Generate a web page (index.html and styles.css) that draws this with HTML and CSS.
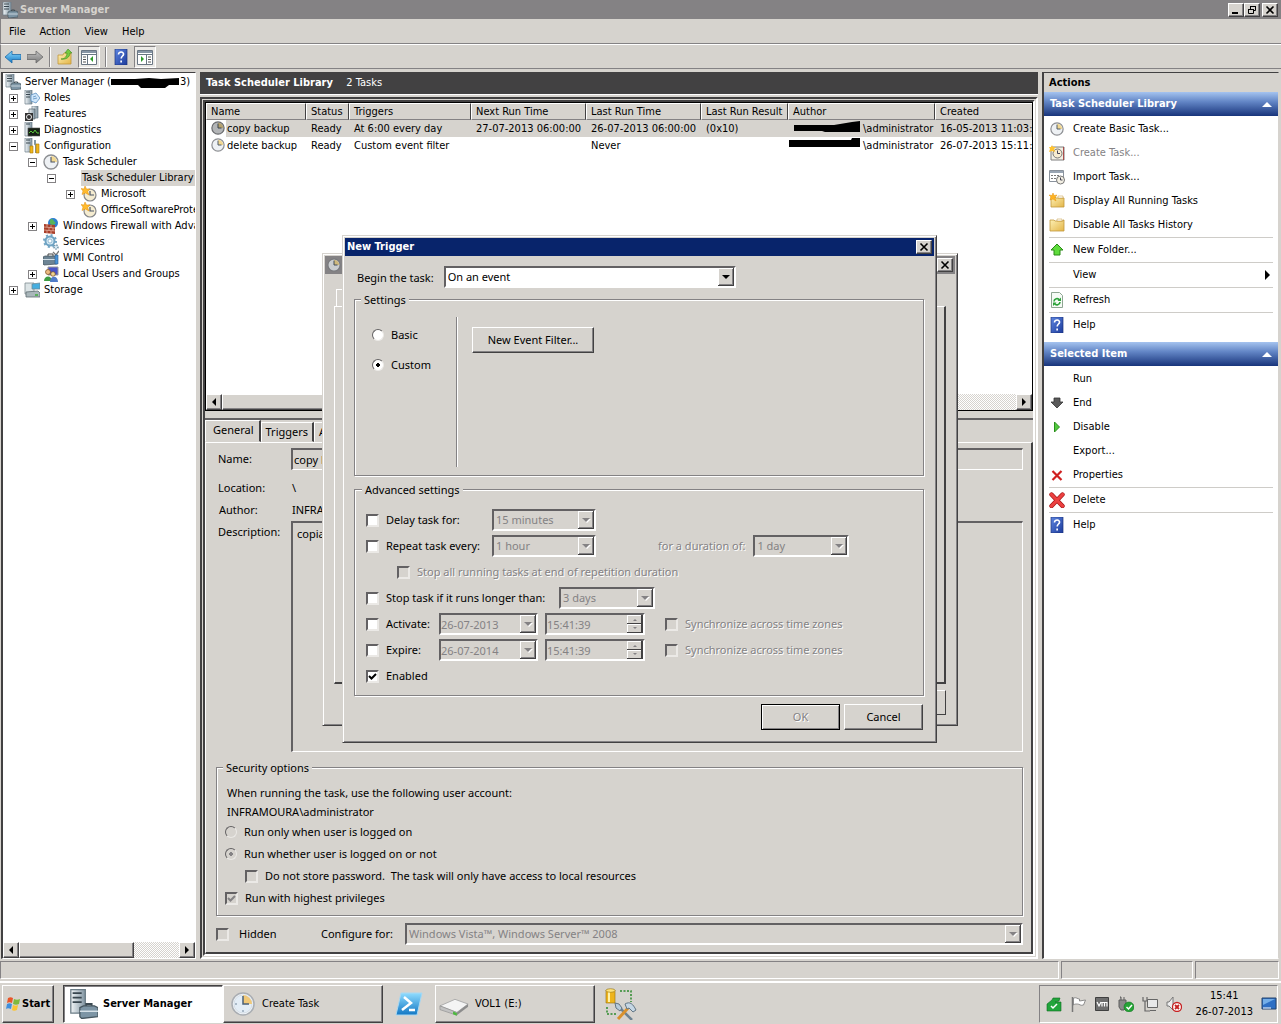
FILE: index.html
```html
<!DOCTYPE html>
<html lang="en">
<head>
  <meta charset="UTF-8">
  <meta name="viewport" content="width=device-width, initial-scale=1.0">
  <title>Server Manager</title>
  <link rel="stylesheet" href="styles.css">
</head>
<body>
  <!-- Icon sprite -->
  <svg class="sprite" aria-hidden="true">
    <defs>
      <linearGradient id="g-tower" x1="0" x2="1" y1="0" y2="0"><stop offset="0" stop-color="#f2f6f8"/><stop offset="1" stop-color="#7f93a0"/></linearGradient>
      <linearGradient id="g-blue" x1="0" x2="0" y1="0" y2="1"><stop offset="0" stop-color="#8fdcff"/><stop offset="1" stop-color="#1277c4"/></linearGradient>
      <linearGradient id="g-gray" x1="0" x2="0" y1="0" y2="1"><stop offset="0" stop-color="#c4c4c4"/><stop offset="1" stop-color="#777"/></linearGradient>
      <linearGradient id="g-folder" x1="0" x2="1" y1="0" y2="1"><stop offset="0" stop-color="#fdf0b4"/><stop offset="1" stop-color="#e3b548"/></linearGradient>
      <linearGradient id="g-help" x1="0" x2="1" y1="0" y2="1"><stop offset="0" stop-color="#5f86e0"/><stop offset="1" stop-color="#1c3b9c"/></linearGradient>
    </defs>
    <symbol id="i-server" viewBox="0 0 16 16">
      <path d="M1 0h8v13H1z" fill="url(#g-tower)" stroke="#6b7c86" stroke-width=".7"/>
      <path d="M2 2h5M2 4.500h5M2 7h5" stroke="#38464f"/>
      <path d="M9.500 9.500V8h3v1.500" fill="none" stroke="#3c4a52"/>
      <path d="M6 10l2-1h6l2 1v5l-9 1-1-1z" fill="#7d95a5" stroke="#46565f" stroke-width=".7"/>
      <path d="M6 12h10" stroke="#d7e2e8" stroke-width=".8"/>
    </symbol>
    <symbol id="i-roles" viewBox="0 0 16 16">
      <path d="M1 0h7v14H1z" fill="url(#g-tower)" stroke="#6b7c86" stroke-width=".7"/>
      <path d="M2 2h4M2 4.500h4M2 7h4" stroke="#38464f"/>
      <path d="M7 5l5-2 4 5-4 5-5-2z" fill="#cfe6fa" stroke="#5a8fc0" stroke-width=".8"/>
      <path d="M9 7l3-1M9 9l4-1" stroke="#5a8fc0" stroke-width=".8"/>
    </symbol>
    <symbol id="i-features" viewBox="0 0 16 16">
      <path d="M8 0h6v12H8z" fill="url(#g-tower)" stroke="#6b7c86" stroke-width=".7"/>
      <path d="M5 3h6v10H5z" fill="url(#g-tower)" stroke="#56656e" stroke-width=".7"/>
      <path d="M1 7h8v8H1z" fill="#333"/>
      <circle cx="5" cy="11" r="2.500" fill="#333" stroke="#eee"/>
    </symbol>
    <symbol id="i-diag" viewBox="0 0 16 16">
      <path d="M1 0h7v14H1z" fill="url(#g-tower)" stroke="#6b7c86" stroke-width=".7"/>
      <path d="M2 2h4" stroke="#38464f"/>
      <path d="M4 6h12v8H4z" fill="#162016" stroke="#555" stroke-width=".6"/>
      <path d="M5 11l2-2 2 2 2-3 2 3h2" fill="none" stroke="#5cc83b"/>
    </symbol>
    <symbol id="i-config" viewBox="0 0 16 16">
      <path d="M1 0h7v14H1z" fill="url(#g-tower)" stroke="#6b7c86" stroke-width=".7"/>
      <path d="M2 2h4M2 5h4" stroke="#38464f"/>
      <path d="M7 4v10M11 2v4l1 1v8" stroke="#8597a2" stroke-width="2" fill="none"/>
      <path d="M6 8h3v7H6zM12 6h3v9h-3z" fill="#efb61c" stroke="#a77806" stroke-width=".6"/>
    </symbol>
    <symbol id="i-clock" viewBox="0 0 16 16">
      <circle cx="8" cy="8" r="7" fill="#eef1f4" stroke="#8d8f93" stroke-width="1.400"/>
      <path d="M8 8V2a6 6 0 0 1 6 6z" fill="#f2d892"/>
      <path d="M8 3v5h4" fill="none" stroke="#4a5566" stroke-width="1.100"/>
    </symbol>
    <symbol id="i-starclock" viewBox="0 0 16 16">
      <circle cx="9" cy="9" r="6" fill="#f5ecd0" stroke="#85878a" stroke-width="1.200"/>
      <path d="M9 5v4h4" fill="none" stroke="#4a5566" stroke-width="1.200"/>
      <path d="M4 0l1.500 3L9 3 6.500 5.500 8 9 4.500 7 1 8.500 2 5 0 2.500 3 3z" fill="#ffbb2e" stroke="#e08c0d" stroke-width=".5"/>
    </symbol>
    <symbol id="i-firewall" viewBox="0 0 16 16">
      <circle cx="10" cy="5" r="5" fill="#2d7fd0"/>
      <path d="M8 1c3 0 2 2 4 3s-1 3-3 3-3-4-1-6z" fill="#58b45a"/>
      <path d="M1 6l11 1v9L1 15z" fill="#a83f2b"/>
      <path d="M1 9l11 1M1 12l11 1M4 6v3M8 7v3M6 9.500v3M10 10v3M4 12v3M8 13v3" stroke="#e8b9a8" stroke-width=".7"/>
    </symbol>
    <symbol id="i-gear" viewBox="0 0 16 16">
      <circle cx="7" cy="7" r="4.500" fill="#d8ebf5" stroke="#6fa3c3" stroke-width="2"/>
      <circle cx="7" cy="7" r="6" fill="none" stroke="#6fa3c3" stroke-width="2" stroke-dasharray="2 2.700"/>
      <circle cx="7" cy="7" r="2" fill="#fff" stroke="#6fa3c3" stroke-width=".7"/>
      <circle cx="13" cy="13" r="2" fill="#d8ebf5" stroke="#6f93a8" stroke-width="1.500" stroke-dasharray="1.200 1"/>
    </symbol>
    <symbol id="i-wmi" viewBox="0 0 16 16">
      <path d="M5 6V4h5v2" fill="none" stroke="#444"/>
      <path d="M0 7l2-1h10l2 1v7l-13 1-1-1z" fill="#6d8494" stroke="#3d4d58" stroke-width=".7"/>
      <path d="M0 9.500h13" stroke="#d2dee6"/>
      <path d="M10 2l3 3 3-4" fill="none" stroke="#777" stroke-width="1.300"/>
      <path d="M12 5h3v9h-3z" fill="#4a93d6" stroke="#2a5d90" stroke-width=".6"/>
    </symbol>
    <symbol id="i-users" viewBox="0 0 16 16">
      <path d="M5 1h10v8H5z" fill="#4a55c8" stroke="#999"/>
      <circle cx="5" cy="6" r="2.500" fill="#edbb84" stroke="#7a4d1c" stroke-width=".7"/>
      <path d="M1 15c0-6 8-6 8 0z" fill="#3e9d44"/>
      <circle cx="10" cy="8" r="2.300" fill="#f0d48f" stroke="#7a4d1c" stroke-width=".7"/>
      <path d="M7 16c0-7 8-7 8 0z" fill="#4f7cc9"/>
    </symbol>
    <symbol id="i-storage" viewBox="0 0 16 16">
      <path d="M1 1h9v11H1z" fill="#dce4e6" stroke="#7e8b90" stroke-width=".8"/>
      <path d="M8 2l8-1v6H8z" fill="#45aee0" stroke="#6c8a99" stroke-width=".8"/>
      <path d="M2 10l12-1 2 2v4H2z" fill="#aab7bb" stroke="#5f6d72" stroke-width=".8"/>
      <path d="M11 13h3" stroke="#3fae3b" stroke-width="1.500"/>
    </symbol>
    <symbol id="i-help" viewBox="0 0 16 16">
      <path d="M2 0h12v16H2z" fill="url(#g-help)" stroke="#1c347c" stroke-width=".7"/>
      <path d="M5.500 5.500c0-3.500 5.500-3 5 0-.3 1.600-2.300 1.700-2.300 4" fill="none" stroke="#fff" stroke-width="1.600"/>
      <path d="M7.300 11.500H9v2H7.300z" fill="#fff"/>
    </symbol>
    <symbol id="i-back" viewBox="0 0 16 16">
      <path d="M0 8l7-6v3.500h9v5H7V14z" fill="url(#g-blue)" stroke="#1d6ba8" stroke-width=".8"/>
    </symbol>
    <symbol id="i-forward" viewBox="0 0 16 16">
      <path d="M16 8L9 2v3.500H0v5h9V14z" fill="url(#g-gray)" stroke="#6a6a6a" stroke-width=".8"/>
    </symbol>
    <symbol id="i-up" viewBox="0 0 16 16">
      <path d="M1 6h5l1-2h7v11H1z" fill="url(#g-folder)" stroke="#c2973a" stroke-width=".8"/>
      <path d="M4 10c4 0 6-3 6-6h-2l3-4 4 4h-2c0 4-4 7-9 6z" fill="#76c940" stroke="#3e8c1c" stroke-width=".6"/>
    </symbol>
    <symbol id="i-paneleft" viewBox="0 0 16 16">
      <path d="M.5 1.500h15v14H.5z" fill="#fff" stroke="#6a7683"/>
      <path d="M1 2h14v2H1z" fill="#8795a5"/>
      <path d="M0 5.500h16M6.500 5v10" stroke="#6a7683"/>
      <path d="M2 8h3M2 10.500h3M2 13h3" stroke="#555"/>
      <path d="M12 7v6L9 10z" fill="#2f9a2a"/>
    </symbol>
    <symbol id="i-paneright" viewBox="0 0 16 16">
      <path d="M.5 1.500h15v14H.5z" fill="#fff" stroke="#6a7683"/>
      <path d="M1 2h14v2H1z" fill="#8795a5"/>
      <path d="M0 5.500h16M9.500 5v10" stroke="#6a7683"/>
      <path d="M11 8h3M11 10.500h3M11 13h3" stroke="#555"/>
      <path d="M4 7v6l3-3z" fill="#2f9a2a"/>
    </symbol>
    <symbol id="i-newtask" viewBox="0 0 16 16">
      <path d="M2 2h13v13H2z" fill="#f3f0e4" stroke="#7e7e7e"/>
      <path d="M14.500 2v13" stroke="#a33" stroke-width=".8"/>
      <circle cx="8.500" cy="8.500" r="4.500" fill="#f7ecd0" stroke="#777"/>
      <path d="M8.500 5.500v3H11" fill="none" stroke="#445"/>
      <path d="M3 0l1 2h3L5 4l1 3-3-1-3 1 1-3-1-2h2z" fill="#ffc332"/>
    </symbol>
    <symbol id="i-import" viewBox="0 0 16 16">
      <path d="M.5 1.500h14v11H.5z" fill="#fff" stroke="#8a929c"/>
      <path d="M1 2h13v2H1z" fill="#9aa6b4"/>
      <path d="M2 6.500h2M5 6.500h2M8 6.500h2M2 9.500h2M5 9.500h2" stroke="#777"/>
      <circle cx="11.500" cy="11" r="4" fill="#f4f0e4" stroke="#777"/>
      <path d="M11.500 8.500V11h2" fill="none" stroke="#445"/>
    </symbol>
    <symbol id="i-folder" viewBox="0 0 16 16">
      <path d="M1 3h4l1 1h8V3h1v11H1z" fill="url(#g-folder)" stroke="#c2973a" stroke-width=".8"/>
      <path d="M8 2h5v2H8z" fill="#fff" stroke="#c2973a" stroke-width=".5"/>
    </symbol>
    <symbol id="i-starfolder" viewBox="0 0 16 16">
      <path d="M2 4h4l1 1h8v9H2z" fill="url(#g-folder)" stroke="#c2973a" stroke-width=".8"/>
      <path d="M9 3h5v2H9z" fill="#fff" stroke="#c2973a" stroke-width=".5"/>
      <path d="M4 0l1 2.500L8 2 6 4.500 7 8 4 6 1 7l1-3-2-2 3 .5z" fill="#ffb321" stroke="#e2920e" stroke-width=".5"/>
    </symbol>
    <symbol id="i-greenup" viewBox="0 0 16 16">
      <path d="M8 2l6 6h-3v5H5V8H2z" fill="#5fdc3c" stroke="#2a8a17"/>
    </symbol>
    <symbol id="i-refresh" viewBox="0 0 16 16">
      <path d="M2.500.5h8l3 3v12h-11z" fill="#f6fbf6" stroke="#8ea592"/>
      <path d="M5 9.500a3 3 0 0 1 5.500-1.500M11 10a3 3 0 0 1-5.500 1.500" fill="none" stroke="#2da23a" stroke-width="1.700"/>
      <path d="M8.500 9H12V5.500zM7.500 10.500H4V14z" fill="#2da23a"/>
    </symbol>
    <symbol id="i-end" viewBox="0 0 16 16">
      <path d="M5 3h6v4h3l-6 6-6-6h3z" fill="#5b5b5b" stroke="#333" stroke-width=".8"/>
    </symbol>
    <symbol id="i-play" viewBox="0 0 16 16">
      <path d="M5.500 3v10l5-5z" fill="#52c93f" stroke="#2a8f1b"/>
    </symbol>
    <symbol id="i-redx" viewBox="0 0 16 16">
      <path d="M3.500 4l9 9M12.500 4l-9 9" stroke="#cf2020" stroke-width="2.200"/>
    </symbol>
    <symbol id="i-bigx" viewBox="0 0 16 16">
      <path d="M2.500 2.500l11 11.500M13.500 2.500l-11 11.500" stroke="#a01414" stroke-width="4.400" stroke-linecap="round"/>
      <path d="M2.500 2.500l11 11.500M13.500 2.500l-11 11.500" stroke="#ec4040" stroke-width="3.200" stroke-linecap="round"/>
    </symbol>
    <symbol id="i-close" viewBox="0 0 10 10">
      <path d="M1.500 1.500l7 7M8.500 1.500l-7 7" stroke="#000" stroke-width="1.600"/>
    </symbol>
  </svg>

  <header class="titlebar">
    <svg class="icon"><use href="#i-server"/></svg>
    <h1>Server Manager</h1>
    <div class="window-buttons">
      <button class="win-btn" aria-label="Minimize"><svg viewBox="0 0 10 10"><path d="M1 8h6" stroke="#000" stroke-width="2"/></svg></button>
      <button class="win-btn" aria-label="Restore"><svg viewBox="0 0 10 10"><path d="M3.500 4V1.500h5v4H7M3 1.500h6M1.500 4.500h5v4h-5zM1 4.500h6" fill="none" stroke="#000"/></svg></button>
      <button class="win-btn last" aria-label="Close"><svg><use href="#i-close"/></svg></button>
    </div>
  </header>

  <nav class="menubar">
    <a href="#">File</a>
    <a href="#">Action</a>
    <a href="#">View</a>
    <a href="#">Help</a>
  </nav>

  <div class="toolbar">
    <button aria-label="Back"><svg class="icon"><use href="#i-back"/></svg></button>
    <button aria-label="Forward"><svg class="icon"><use href="#i-forward"/></svg></button>
    <span class="tool-sep"></span>
    <button aria-label="Up one level"><svg class="icon"><use href="#i-up"/></svg></button>
    <button class="pressed" aria-label="Console tree"><svg class="icon"><use href="#i-paneleft"/></svg></button>
    <span class="tool-sep"></span>
    <button aria-label="Help"><svg class="icon"><use href="#i-help"/></svg></button>
    <button class="pressed" aria-label="Action pane"><svg class="icon"><use href="#i-paneright"/></svg></button>
  </div>

  <main class="panes">
    <!-- Console tree -->
    <aside class="tree-pane">
      <div class="tree">
        <div class="node root"><svg class="icon"><use href="#i-server"/></svg><span>Server Manager (</span><svg class="redact-tree" viewBox="0 0 70 12"><path d="M0 3h24l14-1 12 1 18-1v7H58l-4 3H30l-3-3H0z"/></svg><span>3)</span></div>
        <ul>
          <li><div class="node"><i class="exp plus"></i><svg class="icon"><use href="#i-roles"/></svg><span>Roles</span></div></li>
          <li><div class="node"><i class="exp plus"></i><svg class="icon"><use href="#i-features"/></svg><span>Features</span></div></li>
          <li><div class="node"><i class="exp plus"></i><svg class="icon"><use href="#i-diag"/></svg><span>Diagnostics</span></div></li>
          <li><div class="node"><i class="exp"></i><svg class="icon"><use href="#i-config"/></svg><span>Configuration</span></div>
            <ul>
              <li><div class="node"><i class="exp"></i><svg class="icon"><use href="#i-clock"/></svg><span>Task Scheduler</span></div>
                <ul>
                  <li><div class="node no-icon"><i class="exp"></i><span class="selected">Task Scheduler Library</span></div>
                    <ul>
                      <li><div class="node"><i class="exp plus"></i><svg class="icon"><use href="#i-starclock"/></svg><span>Microsoft</span></div></li>
                      <li><div class="node leaf"><svg class="icon"><use href="#i-starclock"/></svg><span>OfficeSoftwareProtectionPlatform</span></div></li>
                    </ul>
                  </li>
                </ul>
              </li>
              <li><div class="node"><i class="exp plus"></i><svg class="icon"><use href="#i-firewall"/></svg><span>Windows Firewall with Advanced Security</span></div></li>
              <li><div class="node leaf"><svg class="icon"><use href="#i-gear"/></svg><span>Services</span></div></li>
              <li><div class="node leaf"><svg class="icon"><use href="#i-wmi"/></svg><span>WMI Control</span></div></li>
              <li><div class="node"><i class="exp plus"></i><svg class="icon"><use href="#i-users"/></svg><span>Local Users and Groups</span></div></li>
            </ul>
          </li>
          <li><div class="node"><i class="exp plus"></i><svg class="icon"><use href="#i-storage"/></svg><span>Storage</span></div></li>
        </ul>
      </div>
      <div class="scrollbar">
        <button class="scroll-btn left" aria-label="Scroll left"></button>
        <div class="thumb tree-thumb"></div>
        <button class="scroll-btn right" aria-label="Scroll right"></button>
      </div>
    </aside>

    <!-- Task list and details -->
    <section class="center-pane">
      <h2 class="pane-title">Task Scheduler Library <small>2 Tasks</small></h2>
      <div class="center-body">
        <div class="task-list">
          <div class="task-scroll">
            <table class="tasks">
              <colgroup>
                <col class="c-name"><col class="c-status"><col class="c-triggers"><col class="c-next"><col class="c-last"><col class="c-result"><col class="c-author"><col class="c-created">
              </colgroup>
              <thead>
                <tr><th>Name</th><th>Status</th><th>Triggers</th><th>Next Run Time</th><th>Last Run Time</th><th>Last Run Result</th><th>Author</th><th>Created</th></tr>
              </thead>
              <tbody>
                <tr class="current">
                  <td><svg class="task-icon dim"><use href="#i-clock"/></svg>copy backup</td><td>Ready</td><td>At 6:00 every day</td><td>27-07-2013 06:00:00</td><td>26-07-2013 06:00:00</td><td>(0x10)</td>
                  <td><svg class="redact" viewBox="0 0 70 12"><path d="M1 4h40l18-3 8-1v11H32l-3-1H1z"/></svg>\administrator</td><td>16-05-2013 11:03:</td>
                </tr>
                <tr>
                  <td><svg class="task-icon"><use href="#i-clock"/></svg>delete backup</td><td>Ready</td><td>Custom event filter</td><td></td><td>Never</td><td></td>
                  <td><svg class="redact" viewBox="0 0 70 12"><path d="M-4 2h62l1-2h8v9H-4z"/></svg>\administrator</td><td>26-07-2013 15:11:</td>
                </tr>
              </tbody>
            </table>
          </div>
          <div class="scrollbar">
            <button class="scroll-btn left" aria-label="Scroll left"></button>
            <div class="thumb list-thumb"></div>
            <button class="scroll-btn right" aria-label="Scroll right"></button>
          </div>
        </div>

        <div class="details ui">
          <div class="tabs">
            <button class="tab active">General</button>
            <button class="tab">Triggers</button>
            <button class="tab">Actions</button>
          </div>
          <div class="tab-page">
            <div class="props">
              <label for="task-name">Name:</label>
              <input id="task-name" class="sunken" type="text" value="copy backup" readonly>
              <span>Location:</span><span>\</span>
              <span>Author:</span><span>INFRAMOURA\administrator</span>
              <label for="task-desc">Description:</label>
              <textarea id="task-desc" class="sunken" readonly>copia</textarea>
            </div>
            <fieldset class="group security">
              <legend>Security options</legend>
              <p>When running the task, use the following user account:</p>
              <p>INFRAMOURA\administrator</p>
              <label class="check"><input type="radio" name="logon" disabled>Run only when user is logged on</label>
              <label class="check"><input type="radio" name="logon" checked disabled>Run whether user is logged on or not</label>
              <label class="check indent"><input type="checkbox" disabled>Do not store password.&nbsp; The task will only have access to local resources</label>
              <label class="check"><input type="checkbox" checked disabled>Run with highest privileges</label>
            </fieldset>
            <div class="configure">
              <label class="check hidden-check"><input type="checkbox" disabled>Hidden</label>
              <label for="configure-for">Configure for:</label>
              <select id="configure-for" class="sunken" disabled><option>Windows Vista™, Windows Server™ 2008</option></select>
            </div>
          </div>
        </div>
      </div>
    </section>

    <!-- Actions -->
    <aside class="actions-pane">
      <h2>Actions</h2>
      <h3>Task Scheduler Library<i class="collapse"></i></h3>
      <ul>
        <li><a href="#"><svg class="icon small"><use href="#i-clock"/></svg>Create Basic Task...</a></li>
        <li><a href="#" class="off"><svg class="icon"><use href="#i-newtask"/></svg>Create Task...</a></li>
        <li><a href="#"><svg class="icon"><use href="#i-import"/></svg>Import Task...</a></li>
        <li><a href="#"><svg class="icon"><use href="#i-starfolder"/></svg>Display All Running Tasks</a></li>
        <li><a href="#"><svg class="icon"><use href="#i-folder"/></svg>Disable All Tasks History</a></li>
        <li class="line"><a href="#"><svg class="icon"><use href="#i-greenup"/></svg>New Folder...</a></li>
        <li class="line"><a href="#"><span class="icon"></span>View<i class="submenu"></i></a></li>
        <li class="line"><a href="#"><svg class="icon"><use href="#i-refresh"/></svg>Refresh</a></li>
        <li class="line"><a href="#"><svg class="icon"><use href="#i-help"/></svg>Help</a></li>
      </ul>
      <h3>Selected Item<i class="collapse"></i></h3>
      <ul>
        <li><a href="#"><span class="icon"></span>Run</a></li>
        <li><a href="#"><svg class="icon"><use href="#i-end"/></svg>End</a></li>
        <li><a href="#"><svg class="icon"><use href="#i-play"/></svg>Disable</a></li>
        <li><a href="#"><span class="icon"></span>Export...</a></li>
        <li><a href="#"><svg class="icon"><use href="#i-redx"/></svg>Properties</a></li>
        <li class="line"><a href="#"><svg class="icon"><use href="#i-bigx"/></svg>Delete</a></li>
        <li class="line"><a href="#"><svg class="icon"><use href="#i-help"/></svg>Help</a></li>
      </ul>
    </aside>
  </main>

  <div class="statusbar"><span></span><span></span><span></span></div>

  <footer class="taskbar">
    <button class="task-btn start">
      <svg viewBox="0 0 16 16"><path d="M3 2c2-1 3-1 5 0L7 7C5 6 4 6 2 7z" fill="#e8562a"/><path d="M9 3c2 1 4 1 6 0l-1 5c-2 1-4 1-6 0z" fill="#7fba3c"/><path d="M2 8c2-1 3-1 5 0l-1 5c-2-1-4-1-5 0z" fill="#3f8fdd"/><path d="M8 9c2 1 3 1 5 0l-1 5c-2 1-4 1-5 0z" fill="#fbc531"/></svg>
      Start
    </button>
    <button class="task-btn wide current-app"><svg><use href="#i-server"/></svg>Server Manager</button>
    <button class="task-btn wide clock-app">
      <svg viewBox="0 0 24 24"><circle cx="12" cy="12" r="11" fill="#eef3f8" stroke="#a9adb2" stroke-width="1.500"/><circle cx="12" cy="12" r="9" fill="#e3edf6" stroke="#c9d2da" stroke-width=".6"/><path d="M12 12V3a9 9 0 0 1 9 9z" fill="#f0c878"/><path d="M12 4v8h6" fill="none" stroke="#4a6078" stroke-width="1.500"/><path d="M12 18v2M4 12h2" stroke="#70859a"/></svg>
      Create Task
    </button>
    <button class="quick" aria-label="PowerShell">
      <svg viewBox="0 0 28 24"><path d="M6 1h21l-5 22H1z" fill="url(#g-blue)" stroke="#a9d8f2"/><path d="M9 5l7 6-9 7" fill="none" stroke="#fff" stroke-width="2.500"/><path d="M14 18h6" stroke="#fff" stroke-width="2.500"/></svg>
    </button>
    <button class="task-btn wide drive-app">
      <svg viewBox="0 0 32 32"><path d="M1 18l16-7 14 5-12 9z" fill="#f4f4f4" stroke="#aaa"/><path d="M1 18l18 7v3L1 22z" fill="#c2c2c2" stroke="#888" stroke-width=".6"/><path d="M19 25l12-9v3l-12 9z" fill="#8c8c8c"/><path d="M15 24l4 1.500v3L15 27z" fill="#4cba3c"/></svg>
      VOL1 (E:)
    </button>
    <button class="quick tools" aria-label="Storage tools">
      <svg viewBox="0 0 32 32"><path d="M1 2h9v13H1z" fill="#eeb41d" stroke="#94700e" stroke-width=".6"/><path d="M3 3h2v11H3z" fill="#fff1a8"/><ellipse cx="5.500" cy="2.500" rx="4.500" ry="1.800" fill="#ffe37a" stroke="#94700e" stroke-width=".6"/><path d="M15 3h11v11M2 19v7h10" fill="none" stroke="#2c8b2c" stroke-width="1.500" stroke-dasharray="2 1.500"/><path d="M14 19l13 13" stroke="#6d8291" stroke-width="2.500"/><path d="M24 19L13 31" stroke="#d9912d" stroke-width="3"/><path d="M10 15l4 1 3 4-2 3-4-3z" fill="#b6cbdc" stroke="#617584"/><path d="M20 16c5-3 8 0 11 6l-3 2-4-4-2 1z" fill="#c5d6e4" stroke="#617584"/></svg>
    </button>
    <div class="tray">
      <svg viewBox="0 0 16 16"><path d="M1 8l5-4 1-2h7l-1 3-4 1h6v9H1z" fill="#22a53c" stroke="#0d6b20" stroke-width=".6"/><path d="M5 10l2 2 4-4" fill="none" stroke="#fff" stroke-width="1.500"/></svg>
      <svg viewBox="0 0 16 16"><path d="M2.500 1v15" stroke="#777" stroke-width="1.500"/><path d="M3.500 2c3-1 4 1 6 1v2l6-1-2 5c-3 1-4-1-6-1s-3 0-4 1z" fill="#fff" stroke="#777" stroke-width=".8"/></svg>
      <svg viewBox="0 0 16 16"><path d="M1.500 1.500h13v13h-13z" fill="#6e6e6e" stroke="#3f3f3f"/><path d="M3 6l2 4 2-4M8 10.500V6.500h2.500v4M10.500 6.500H13v4" fill="none" stroke="#fff" stroke-width="1.200"/></svg>
      <svg viewBox="0 0 16 16"><path d="M2 1h1v3M6 1v3M1 4h7v7l-2 3H3l-2-3z" fill="#8a8a8a" stroke="#5d5d5d"/><circle cx="11" cy="11" r="5" fill="#25a336" stroke="#117520" stroke-width=".6"/><path d="M8.500 11l2 2 3.500-4" fill="none" stroke="#fff" stroke-width="1.500"/></svg>
      <svg viewBox="0 0 16 16"><path d="M5.500 3.500h10v8h-10z" fill="#e8e8e8" stroke="#666"/><path d="M8 14.500h6M1 1v4h4V1M3 5v10h5" fill="none" stroke="#666" stroke-width="1.200"/></svg>
      <svg viewBox="0 0 16 16"><path d="M1 6h2l4-5v13l-4-4H1z" fill="#eee" stroke="#777"/><circle cx="11" cy="11" r="4.500" fill="#fff" stroke="#c62222" stroke-width="1.300"/><path d="M9 9l4 4M13 9l-4 4" stroke="#c62222" stroke-width="1.800"/></svg>
      <time>15:41<br>26-07-2013</time>
      <svg class="show-desktop" viewBox="0 0 16 16"><path d="M1 2h14v11H1z" fill="#2e6fc4" stroke="#24456f"/><path d="M2 3h12L2 9z" fill="#74aee8"/><path d="M2 12h8" stroke="#fff"/></svg>
    </div>
  </footer>

  <!-- Create Task window, mostly behind the trigger dialog -->
  <div class="window create-task">
    <div class="window-title"><svg class="task-icon"><use href="#i-clock"/></svg><button class="win-btn" aria-label="Close"><svg><use href="#i-close"/></svg></button></div>
    <div class="window-body">
      <div class="back-tab"></div>
      <div class="back-page"></div>
      <div class="back-buttons"></div>
    </div>
  </div>

  <div class="window new-trigger ui" role="dialog" aria-labelledby="trigger-title">
    <div class="window-title"><h2 id="trigger-title">New Trigger</h2><button class="win-btn" aria-label="Close"><svg><use href="#i-close"/></svg></button></div>
    <form class="window-body">
      <div class="begin">
        <label for="begin">Begin the task:</label>
        <select id="begin" class="sunken"><option>On an event</option></select>
      </div>

      <fieldset class="group settings">
        <legend>Settings</legend>
        <div class="modes">
          <label class="check"><input type="radio" name="mode">Basic</label>
          <label class="check"><input type="radio" name="mode" checked>Custom</label>
        </div>
        <div class="mode-body"><button type="button" class="btn filter-btn">New Event Filter...</button></div>
      </fieldset>

      <fieldset class="group advanced">
        <legend>Advanced settings</legend>
        <div class="row">
          <label class="check w-repeat"><input type="checkbox">Delay task for:</label>
          <select class="sunken s-time" aria-label="Delay" disabled><option>15 minutes</option></select>
        </div>
        <div class="row">
          <label class="check w-repeat"><input type="checkbox">Repeat task every:</label>
          <select class="sunken s-time" aria-label="Repeat interval" disabled><option>1 hour</option></select>
          <label class="off duration" for="duration">for a duration of:</label>
          <select id="duration" class="sunken s-day" disabled><option>1 day</option></select>
        </div>
        <div class="row sub">
          <label class="check off"><input type="checkbox" disabled>Stop all running tasks at end of repetition duration</label>
        </div>
        <div class="row">
          <label class="check w-stop"><input type="checkbox">Stop task if it runs longer than:</label>
          <select class="sunken s-day" aria-label="Stop after" disabled><option>3 days</option></select>
        </div>
        <div class="row">
          <label class="check w-date"><input type="checkbox">Activate:</label>
          <input type="text" class="sunken date" aria-label="Activate date" value="26-07-2013" disabled>
          <input type="text" class="sunken time" aria-label="Activate time" value="15:41:39" disabled>
          <label class="check off sync"><input type="checkbox" disabled>Synchronize across time zones</label>
        </div>
        <div class="row">
          <label class="check w-date"><input type="checkbox">Expire:</label>
          <input type="text" class="sunken date" aria-label="Expire date" value="26-07-2014" disabled>
          <input type="text" class="sunken time" aria-label="Expire time" value="15:41:39" disabled>
          <label class="check off sync"><input type="checkbox" disabled>Synchronize across time zones</label>
        </div>
        <div class="row">
          <label class="check"><input type="checkbox" checked>Enabled</label>
        </div>
      </fieldset>

      <div class="dialog-buttons">
        <button type="button" class="btn default" disabled>OK</button>
        <button type="button" class="btn">Cancel</button>
      </div>
    </form>
  </div>
</body>
</html>
```
FILE: styles.css
```css
* {
  box-sizing: border-box;
}

body {
  margin: 0;
  min-height: 100vh;
  display: flex;
  flex-direction: column;
  background: #d6d3ce;
  color: #000;
  font: 11px/16px "DejaVu Sans Condensed", "DejaVu Sans", sans-serif;
  overflow: hidden;
}

h1, h2, h3, p, ul {
  margin: 0;
  padding: 0;
  font-size: 11px;
}

ul {
  list-style: none;
}

a {
  color: inherit;
  text-decoration: none;
}

button, input, select, textarea {
  font: inherit;
  color: inherit;
  margin: 0;
}

.ui {
  font-family: "Noto Sans", sans-serif;
}

.sprite {
  position: absolute;
  width: 0;
  height: 0;
}

.icon {
  width: 16px;
  height: 16px;
  flex: none;
}

.icon.small {
  padding: 1px;
}

/* Title bar */
.titlebar {
  display: flex;
  align-items: center;
  height: 19px;
  padding: 0 3px 0 2px;
  gap: 2px;
  background: #848284;
  color: #d6d3ce;
}

.window-buttons {
  display: flex;
  margin-left: auto;
}

.win-btn {
  display: flex;
  align-items: center;
  justify-content: center;
  width: 16px;
  height: 14px;
  padding: 0;
  background: #d6d3ce;
  border: 1px solid;
  border-color: #fff #424142 #424142 #fff;
  box-shadow: inset -1px -1px 0 #848284;
}

.win-btn.last {
  margin-left: 2px;
}

.win-btn svg {
  width: 10px;
  height: 10px;
}

/* Menu and toolbar */
.menubar {
  display: flex;
  height: 25px;
  align-items: center;
  gap: 14px;
  padding: 2px 8px 0;
  border-left: 1px solid #848284;
  border-bottom: 1px solid #848284;
}

.toolbar {
  display: flex;
  align-items: center;
  height: 25px;
  padding: 0 3px;
  gap: 4px;
  border-top: 1px solid #fff;
  border-left: 1px solid #848284;
  border-bottom: 1px solid #848284;
}

.toolbar button {
  display: flex;
  padding: 0;
  border: 1px solid transparent;
  background: none;
}

.toolbar .pressed {
  padding: 2px;
  background: #ebe9e6;
  border-color: #848284 #fff #fff #848284;
}

.tool-sep {
  width: 2px;
  height: 20px;
  margin: 0 1px;
  border-left: 1px solid #848284;
  border-right: 1px solid #fff;
}

/* Panes */
.panes {
  flex: 1;
  display: grid;
  grid-template-columns: 195px 1fr 237px;
  gap: 4px;
  padding: 3px 2px 0 1px;
}

.tree-pane {
  display: flex;
  flex-direction: column;
  min-width: 0;
  background: #fff;
  border: 1px solid;
  border-color: #424142 #fff #fff #424142;
  border-left-width: 2px;
}

.tree {
  flex: 1;
  padding-top: 1px;
  overflow: hidden;
  white-space: nowrap;
}

.tree ul ul {
  padding-left: 19px;
}

.node {
  display: flex;
  align-items: center;
  height: 16px;
  gap: 4px;
  padding-left: 6px;
}

.node.root {
  padding-left: 2px;
}

.node.root span + svg {
  margin: 0 -5px 0 -4px;
}

.node.leaf {
  padding-left: 21px;
}

.node.no-icon {
  gap: 23px;
}

.exp {
  width: 9px;
  height: 9px;
  flex: none;
  margin-right: 2px;
  border: 1px solid #848284;
  background: linear-gradient(#000, #000) center / 5px 1px no-repeat;
}

.exp.plus {
  background: linear-gradient(#000, #000) center / 5px 1px no-repeat, linear-gradient(#000, #000) center / 1px 5px no-repeat;
}

.selected {
  background: #d6d3ce;
  padding: 0 1px;
}

.redact-tree {
  width: 70px;
  height: 12px;
}

/* Scrollbars */
.scrollbar {
  display: flex;
  height: 16px;
  background: repeating-conic-gradient(#fff 0 25%, #d6d3ce 0 50%) 0 0 / 2px 2px;
}

.scroll-btn, .thumb {
  background: #d6d3ce;
  border: 1px solid;
  border-color: #fff #424142 #424142 #fff;
  box-shadow: inset -1px -1px 0 #848284;
}

.scroll-btn {
  width: 16px;
  padding: 0;
  display: flex;
  align-items: center;
  justify-content: center;
}

.scroll-btn::before {
  content: "";
  border: 4px solid transparent;
}

.scroll-btn.left::before {
  border-right-color: #000;
  border-left-width: 0;
}

.scroll-btn.right {
  margin-left: auto;
}

.scroll-btn.right::before {
  border-left-color: #000;
  border-right-width: 0;
}

.tree-thumb {
  width: 60%;
}

.list-thumb {
  width: 89%;
}

/* Center */
.center-pane {
  display: flex;
  flex-direction: column;
  min-width: 0;
}

.pane-title {
  padding: 2px 6px 3px;
  background: #424142;
  color: #fff;
  border-bottom: 1px solid #fff;
  line-height: 17px;
}

.pane-title small {
  font-size: 11px;
  font-weight: normal;
  margin-left: 10px;
}

.center-body {
  flex: 1;
  display: flex;
  flex-direction: column;
  margin-top: 2px;
  border: 5px double #424142;
  border-right-color: #fff;
  border-bottom-color: #fff;
}

.task-list {
  flex: 1;
  display: flex;
  flex-direction: column;
  background: #fff;
  border: 1px solid #000;
}

.task-scroll {
  flex: 1;
  overflow: hidden;
}

.tasks {
  width: 100%;
  table-layout: fixed;
  border-collapse: separate;
  border-spacing: 0;
}

.c-name { width: 100px; }
.c-status { width: 43px; }
.c-triggers { width: 122px; }
.c-next { width: 115px; }
.c-last { width: 115px; }
.c-result { width: 87px; }
.c-author { width: 147px; }

.tasks th, .tasks td {
  height: 17px;
  padding: 0 0 0 5px;
  overflow: hidden;
  white-space: nowrap;
  text-align: left;
  font-weight: normal;
  line-height: 15px;
}

.tasks th {
  background: #d6d3ce;
  border: 1px solid;
  border-color: #fff #424142 #848284 #fff;
  padding-left: 4px;
}

.tasks th:last-child {
  border-right: 0;
}

.tasks .current td {
  background: #d6d3ce;
}

.tasks .current td:first-child {
  background: linear-gradient(#fff, #fff) left / 20px 100% no-repeat #d6d3ce;
}

.task-icon {
  width: 14px;
  height: 14px;
  margin-right: 2px;
  vertical-align: top;
}

.task-icon.dim {
  filter: brightness(.75);
}

.redact {
  width: 70px;
  height: 12px;
  vertical-align: top;
  overflow: visible;
}

/* Details */
.details {
  margin-top: 7px;
  border-top: 2px solid #636163;
}

.tabs {
  display: flex;
  align-items: flex-end;
  height: 22px;
}

.tab {
  height: 20px;
  padding: 0 4px;
  background: #d6d3ce;
  border: 1px solid;
  border-color: #fff #424142 transparent #fff;
  border-right-width: 2px;
}

.tab.active {
  height: 22px;
  padding: 0 5px 2px 7px;
}

.tab-page {
  padding: 5px 8px 7px 12px;
  border: 1px solid;
  border-color: #fff #424142 #424142 #fff;
  border-right-width: 2px;
  border-bottom-width: 2px;
}

.props {
  display: grid;
  grid-template-columns: 73px 1fr;
  line-height: 22px;
}

.props input {
  margin-bottom: 7px;
  padding: 0 1px;
}

.props span + span {
  padding-left: 1px;
}

.props textarea {
  display: block;
  height: 231px;
  padding: 0 4px;
  resize: none;
}

.sunken {
  min-width: 0;
  height: 22px;
  padding: 0 2px;
  background-color: #d6d3ce;
  border: 2px solid;
  border-color: #636163 #fff #fff #636163;
  border-radius: 0;
  outline: none;
  appearance: none;
}

.props .sunken {
  border-right-width: 1px;
  border-bottom-width: 1px;
}

select.sunken, .date {
  background-image: url("data:image/svg+xml,%3Csvg xmlns='http://www.w3.org/2000/svg' width='16' height='18'%3E%3Cpath d='M0 0h16v18H0z' fill='%23424142'/%3E%3Cpath d='M0 0h15v17H0z' fill='%23fff'/%3E%3Cpath d='M1 1h14v16H1z' fill='%23848284'/%3E%3Cpath d='M1 1h13v15H1z' fill='%23d6d3ce'/%3E%3Cpath d='M4 7h8l-4 4z'/%3E%3C/svg%3E");
  background-position: right center;
  background-repeat: no-repeat;
}

select.sunken:disabled, .date:disabled {
  background-image: url("data:image/svg+xml,%3Csvg xmlns='http://www.w3.org/2000/svg' width='16' height='18'%3E%3Cpath d='M0 0h16v18H0z' fill='%23424142'/%3E%3Cpath d='M0 0h15v17H0z' fill='%23fff'/%3E%3Cpath d='M1 1h14v16H1z' fill='%23848284'/%3E%3Cpath d='M1 1h13v15H1z' fill='%23d6d3ce'/%3E%3Cpath d='M5 8h8l-4 4z' fill='%23fff'/%3E%3Cpath d='M4 7h8l-4 4z' fill='%23848284'/%3E%3C/svg%3E");
}

.time:disabled {
  background: #d6d3ce url("data:image/svg+xml,%3Csvg xmlns='http://www.w3.org/2000/svg' width='16' height='18'%3E%3Cpath d='M0 0h16v18H0z' fill='%23424142'/%3E%3Cpath d='M0 0h14v8H0zM0 9h14v8H0z' fill='%23fff'/%3E%3Cpath d='M1 1h13v7H1zM1 10h13v7H1z' fill='%23d6d3ce'/%3E%3Cpath d='M6 6h4L8 4zM6 12h4l-2 2z' fill='%23848284'/%3E%3C/svg%3E") right center no-repeat;
}

.sunken:disabled, .off {
  color: #848284;
  opacity: 1;
}

.off {
  text-shadow: 1px 1px 0 #fff;
}

.group {
  min-width: 0;
  margin: 0;
  padding: 0 10px;
  border: 1px solid #848284;
  box-shadow: 1px 1px 0 #fff, inset 1px 1px 0 #fff;
}

.group legend {
  padding: 0 3px;
  margin-left: -4px;
  line-height: 15px;
  background: #d6d3ce;
}

.check {
  display: flex;
  align-items: center;
  gap: 7px;
}

.check input {
  appearance: none;
  flex: none;
  width: 13px;
  height: 13px;
  background: #fff center no-repeat;
  border: 2px solid;
  border-color: #636163 #ebe9e6 #ebe9e6 #636163;
}

.check input[type="radio"] {
  width: 12px;
  height: 12px;
  border-width: 1px;
  border-radius: 50%;
}

.check input:disabled {
  background-color: #d6d3ce;
}

.check input[type="radio"]:checked {
  background-image: radial-gradient(circle, #000 2px, transparent 2px);
}

.check input[type="radio"]:checked:disabled {
  background-image: radial-gradient(circle, #848284 2px, transparent 2px);
}

.check input[type="checkbox"]:checked {
  background-image: url("data:image/svg+xml,%3Csvg xmlns='http://www.w3.org/2000/svg' width='9' height='9'%3E%3Cpath d='M1 4l2.500 2.500L8 2' fill='none' stroke='%23000' stroke-width='2'/%3E%3C/svg%3E");
}

.check input[type="checkbox"]:checked:disabled {
  background-image: url("data:image/svg+xml,%3Csvg xmlns='http://www.w3.org/2000/svg' width='9' height='9'%3E%3Cpath d='M1 4l2.500 2.500L8 2' fill='none' stroke='%23848284' stroke-width='2'/%3E%3C/svg%3E");
}

.security {
  margin: 8px 0 7px -2px;
  padding: 8px 10px 6px;
}

.security p {
  line-height: 19px;
}

.security .check {
  height: 22px;
  margin-left: -2px;
}

.security .indent {
  margin-left: 18px;
}

.configure {
  display: flex;
  align-items: center;
  margin-left: -2px;
}

.configure select {
  flex: 1;
}

.hidden-check {
  width: 105px;
  gap: 10px;
}

.configure > label[for] {
  width: 84px;
}

/* Actions */
.actions-pane {
  background: #fff;
  border: 1px solid;
  border-color: #424142 #d6d3ce #fff #424142;
  border-left-width: 2px;
}

.actions-pane h2 {
  height: 19px;
  padding: 2px 5px 0;
  background: #d6d3ce;
}

.actions-pane h3 {
  display: flex;
  align-items: center;
  justify-content: space-between;
  height: 24px;
  padding: 0 6px;
  color: #fff;
  background: linear-gradient(#a5c3ef, #6386c6 40%, #18347b);
}

.actions-pane h3 + ul {
  padding-top: 1px;
}

.actions-pane ul + h3 {
  margin-top: 5px;
}

.actions-pane li {
  margin: 0 5px;
}

.actions-pane .line {
  border-top: 1px solid #ceccc8;
}

.actions-pane a {
  display: flex;
  align-items: center;
  height: 24px;
  gap: 8px;
}

.actions-pane .off {
  text-shadow: none;
}

.collapse {
  border: 5px solid transparent;
  border-top-width: 0;
  border-bottom-color: #fff;
}

.submenu {
  margin: 0 3px 0 auto;
  border: 5px solid transparent;
  border-right-width: 0;
  border-left-color: #000;
}

/* Status bar */
.statusbar {
  display: grid;
  grid-template-columns: 1fr 132px 84px;
  gap: 2px;
  height: 23px;
  padding: 2px 2px 2px 0;
  border-bottom: 1px solid #fff;
}

.statusbar span {
  border: 1px solid;
  border-color: #848284 #fff #fff #848284;
}

/* Taskbar */
.taskbar {
  display: flex;
  align-items: center;
  height: 42px;
  padding: 0 3px 0 2px;
  border-top: 1px solid #fff;
}

.task-btn {
  display: flex;
  align-items: center;
  height: 38px;
  padding: 0 7px;
  background: #d6d3ce;
  border: 1px solid;
  border-color: #fff #424142 #424142 #fff;
  box-shadow: inset -1px -1px 0 #848284;
}

.task-btn svg {
  width: 28px;
  height: 28px;
}

.task-btn.wide {
  width: 160px;
  gap: 7px;
}

.task-btn.start {
  width: 52px;
  padding: 0 2px;
  gap: 1px;
  font-weight: bold;
}

.task-btn.start svg {
  width: 16px;
  height: 16px;
}

.task-btn.current-app {
  margin-left: 9px;
  padding-left: 5px;
  gap: 5px;
  font-weight: bold;
  background: #fff;
  border-color: #424142 #fff #fff #424142;
  box-shadow: inset 1px 1px 0 #848284;
}

.task-btn.current-app svg {
  width: 29px;
  height: 30px;
}

.task-btn.clock-app svg {
  width: 24px;
  height: 24px;
}

.task-btn.drive-app {
  padding-left: 3px;
  gap: 6px;
}

.task-btn.drive-app svg {
  width: 30px;
  height: 30px;
}

.quick {
  display: flex;
  width: 52px;
  justify-content: center;
  padding: 0;
  border: 0;
  background: none;
}

.quick svg {
  width: 28px;
  height: 24px;
}

.quick.tools svg {
  width: 32px;
  height: 32px;
}

.tray {
  display: flex;
  align-items: center;
  gap: 8px;
  height: 38px;
  margin-left: auto;
  padding: 0 0 0 6px;
  border: 1px solid;
  border-color: #848284 #fff #fff #848284;
}

.tray svg {
  width: 16px;
  height: 16px;
}

.tray time {
  margin-left: 5px;
  text-align: center;
}

/* Windows on the desktop */
.window {
  position: absolute;
  background: #d6d3ce;
  border: 1px solid;
  border-color: #d6d3ce #424142 #424142 #d6d3ce;
  box-shadow: inset 1px 1px 0 #fff, inset -1px -1px 0 #848284;
  padding: 2px;
}

.create-task {
  left: 322px;
  top: 253px;
  width: 636px;
}

.new-trigger {
  left: 342px;
  top: 235px;
  width: 595px;
}

.window-title {
  display: flex;
  align-items: center;
  justify-content: space-between;
  height: 18px;
  padding: 0 2px;
  background: #08246b;
  color: #fff;
  font-family: "DejaVu Sans Condensed", sans-serif;
}

.create-task .window-title {
  background: #848284;
}

.create-task .task-icon {
  filter: brightness(.85);
}

.new-trigger .window-body {
  padding: 10px 10px 10px 9px;
}

.create-task .window-body {
  padding: 15px 9px 8px;
}

.back-tab {
  width: 60px;
  height: 17px;
  margin-left: 2px;
  border: 1px solid #fff;
  border-bottom: 0;
}

.back-page {
  height: 378px;
  border: 1px solid;
  border-color: #fff #424142 #424142 #fff;
  border-right-width: 2px;
  border-bottom-width: 2px;
}

.back-buttons {
  height: 25px;
  width: 78px;
  margin: 6px 0 0 auto;
  border: 1px solid;
  border-color: #fff #424142 #424142 #fff;
}

.begin {
  display: flex;
  align-items: center;
  gap: 10px;
  padding-left: 3px;
}

.begin label {
  padding-top: 2px;
}

.begin select {
  width: 292px;
  background-color: #fff;
}

.settings {
  display: flex;
  height: 184px;
  margin-top: 4px;
  padding: 10px 17px 8px;
}

.settings legend {
  margin-left: -11px;
}

.modes {
  width: 85px;
  height: 150px;
  padding-top: 3px;
  border-right: 1px solid #848284;
  box-shadow: 1px 0 0 #fff;
}

.modes .check {
  height: 30px;
}

.mode-body {
  padding: 10px 15px;
}

.btn {
  width: 79px;
  height: 26px;
  padding: 0;
  background: #d6d3ce;
  border: 1px solid;
  border-color: #fff #424142 #424142 #fff;
  box-shadow: inset -1px -1px 0 #848284;
}

.btn:disabled {
  color: #848284;
  text-shadow: 1px 1px 0 #fff;
}

.btn.default {
  border-color: #000;
  box-shadow: inset 1px 1px 0 #fff, inset -1px -1px 0 #848284;
}

.filter-btn {
  width: 122px;
}

.advanced {
  margin-top: 6px;
  padding: 10px 11px 6px;
}

.row {
  display: flex;
  align-items: center;
  height: 26px;
}

.row.sub {
  padding-left: 31px;
}

.w-repeat { width: 126px; }
.w-stop { width: 193px; }
.w-date { width: 73px; }
.s-time { width: 104px; }
.s-day { width: 96px; }

.duration {
  margin: 0 8px 0 62px;
}

.date {
  width: 99px;
  padding: 0;
}

.time {
  width: 100px;
  margin-left: 7px;
  padding: 0;
}

.sync {
  margin-left: 20px;
}

.dialog-buttons {
  display: flex;
  justify-content: flex-end;
  gap: 4px;
  margin-top: 8px;
  padding-right: 1px;
}
```
